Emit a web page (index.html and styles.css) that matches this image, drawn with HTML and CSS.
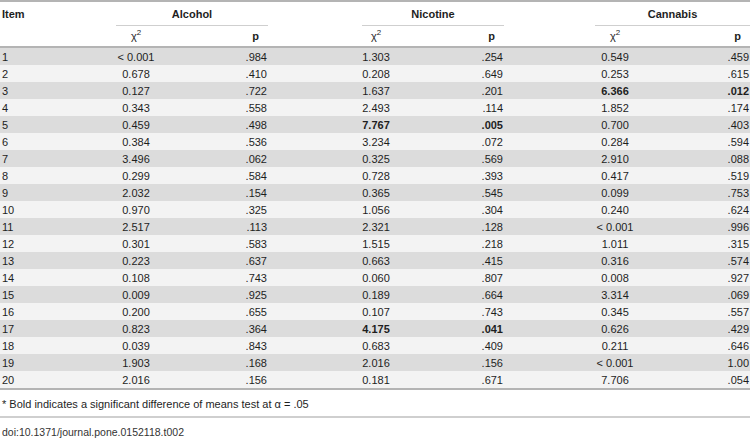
FILE: index.html
```html
<!DOCTYPE html>
<html>
<head>
    <meta charset="UTF-8">
    <title>Table 2</title>
    <link rel="stylesheet" href="styles.css">
</head>
<body>
    <table class="stats">
        <colgroup>
            <col class="c-item">
            <col class="c-chi"><col class="c-p1">
            <col class="c-gap1">
            <col class="c-chi2"><col class="c-p2">
            <col class="c-gap2">
            <col class="c-chi"><col class="c-p3">
        </colgroup>
        <thead>
            <tr class="group_row">
                <th class="item">Item</th>
                <th colspan="2" class="group">Alcohol</th>
                <th></th>
                <th colspan="2" class="group">Nicotine</th>
                <th></th>
                <th colspan="2" class="group">Cannabis</th>
            </tr>
            <tr class="sub_row">
                <th></th>
                <th class="chi">χ<sup>2</sup></th><th class="p">p</th>
                <th></th>
                <th class="chi">χ<sup>2</sup></th><th class="p">p</th>
                <th></th>
                <th class="chi">χ<sup>2</sup></th><th class="p">p</th>
            </tr>
        </thead>
        <tbody>
            <tr><td>1</td><td class="chi">&lt; 0.001</td><td class="p">.984</td><td></td><td class="chi">1.303</td><td class="p">.254</td><td></td><td class="chi">0.549</td><td class="p">.459</td></tr>
            <tr><td>2</td><td class="chi">0.678</td><td class="p">.410</td><td></td><td class="chi">0.208</td><td class="p">.649</td><td></td><td class="chi">0.253</td><td class="p">.615</td></tr>
            <tr><td>3</td><td class="chi">0.127</td><td class="p">.722</td><td></td><td class="chi">1.637</td><td class="p">.201</td><td></td><td class="chi sig">6.366</td><td class="p sig">.012</td></tr>
            <tr><td>4</td><td class="chi">0.343</td><td class="p">.558</td><td></td><td class="chi">2.493</td><td class="p">.114</td><td></td><td class="chi">1.852</td><td class="p">.174</td></tr>
            <tr><td>5</td><td class="chi">0.459</td><td class="p">.498</td><td></td><td class="chi sig">7.767</td><td class="p sig">.005</td><td></td><td class="chi">0.700</td><td class="p">.403</td></tr>
            <tr><td>6</td><td class="chi">0.384</td><td class="p">.536</td><td></td><td class="chi">3.234</td><td class="p">.072</td><td></td><td class="chi">0.284</td><td class="p">.594</td></tr>
            <tr><td>7</td><td class="chi">3.496</td><td class="p">.062</td><td></td><td class="chi">0.325</td><td class="p">.569</td><td></td><td class="chi">2.910</td><td class="p">.088</td></tr>
            <tr><td>8</td><td class="chi">0.299</td><td class="p">.584</td><td></td><td class="chi">0.728</td><td class="p">.393</td><td></td><td class="chi">0.417</td><td class="p">.519</td></tr>
            <tr><td>9</td><td class="chi">2.032</td><td class="p">.154</td><td></td><td class="chi">0.365</td><td class="p">.545</td><td></td><td class="chi">0.099</td><td class="p">.753</td></tr>
            <tr><td>10</td><td class="chi">0.970</td><td class="p">.325</td><td></td><td class="chi">1.056</td><td class="p">.304</td><td></td><td class="chi">0.240</td><td class="p">.624</td></tr>
            <tr><td>11</td><td class="chi">2.517</td><td class="p">.113</td><td></td><td class="chi">2.321</td><td class="p">.128</td><td></td><td class="chi">&lt; 0.001</td><td class="p">.996</td></tr>
            <tr><td>12</td><td class="chi">0.301</td><td class="p">.583</td><td></td><td class="chi">1.515</td><td class="p">.218</td><td></td><td class="chi">1.011</td><td class="p">.315</td></tr>
            <tr><td>13</td><td class="chi">0.223</td><td class="p">.637</td><td></td><td class="chi">0.663</td><td class="p">.415</td><td></td><td class="chi">0.316</td><td class="p">.574</td></tr>
            <tr><td>14</td><td class="chi">0.108</td><td class="p">.743</td><td></td><td class="chi">0.060</td><td class="p">.807</td><td></td><td class="chi">0.008</td><td class="p">.927</td></tr>
            <tr><td>15</td><td class="chi">0.009</td><td class="p">.925</td><td></td><td class="chi">0.189</td><td class="p">.664</td><td></td><td class="chi">3.314</td><td class="p">.069</td></tr>
            <tr><td>16</td><td class="chi">0.200</td><td class="p">.655</td><td></td><td class="chi">0.107</td><td class="p">.743</td><td></td><td class="chi">0.345</td><td class="p">.557</td></tr>
            <tr><td>17</td><td class="chi">0.823</td><td class="p">.364</td><td></td><td class="chi sig">4.175</td><td class="p sig">.041</td><td></td><td class="chi">0.626</td><td class="p">.429</td></tr>
            <tr><td>18</td><td class="chi">0.039</td><td class="p">.843</td><td></td><td class="chi">0.683</td><td class="p">.409</td><td></td><td class="chi">0.211</td><td class="p">.646</td></tr>
            <tr><td>19</td><td class="chi">1.903</td><td class="p">.168</td><td></td><td class="chi">2.016</td><td class="p">.156</td><td></td><td class="chi">&lt; 0.001</td><td class="p">1.00</td></tr>
            <tr><td>20</td><td class="chi">2.016</td><td class="p">.156</td><td></td><td class="chi">0.181</td><td class="p">.671</td><td></td><td class="chi">7.706</td><td class="p">.054</td></tr>
        </tbody>
    </table>
    <p class="footnote">* Bold indicates a significant difference of means test at α = .05</p>
    <p class="doi">doi:10.1371/journal.pone.0152118.t002</p>
</body>
</html>
```

FILE: styles.css
```css
body {
    margin: 0;
    font-family: 'Liberation Sans', Arial, sans-serif;
    font-size: 11px;
    color: #1e1e1e;
    background-color: white;
}

:root {
    --clr-line: #b4b4b4;
    --clr-row-dark: #dcdcdc;
    --clr-row-light: #f3f3f3;
}

.stats {
    width: 750px;
    table-layout: fixed;
    border-collapse: collapse;
    border-top: 2px solid var(--clr-line);
    border-bottom: 2px solid var(--clr-line);
}

.c-item { width: 116px; }
.c-chi { width: 40px; }
.c-chi2 { width: 28px; }
.c-p1 { width: 112px; }
.c-gap1 { width: 94px; }
.c-p2 { width: 114px; }
.c-gap2 { width: 91px; }
.c-p3 { width: 115px; }

.stats th,
.stats td {
    padding: 0 2px;
    white-space: nowrap;
}

.stats th {
    font-weight: 700;
}

.group_row th {
    height: 23px;
    text-align: left;
}

.group_row th.group {
    text-align: center;
    border-bottom: 1px solid #cfcfcf;
}

.sub_row th {
    height: 20px;
    border-bottom: 2px solid var(--clr-line);
}

.sub_row th.chi {
    font-weight: 400;
}

.sub_row th.p {
    padding-right: 9px;
}

.stats sup {
    font-size: 8px;
    line-height: 0;
    vertical-align: 5px;
}

.stats td {
    height: 17px;
    text-align: left;
}

.stats .chi {
    text-align: center;
    padding: 0;
    overflow: visible;
}

.stats .p {
    text-align: right;
    padding-right: 1px;
}

.stats tbody tr:nth-child(odd) {
    background-color: var(--clr-row-dark);
}

.stats tbody tr:nth-child(even) {
    background-color: var(--clr-row-light);
}

.stats .sig {
    font-weight: 700;
}

.footnote {
    margin: 0;
    padding: 8px 2px 5px;
    line-height: 13px;
    border-bottom: 2px solid #cfcfcf;
}

.doi {
    margin: 0;
    padding: 8px 2px 0;
    font-size: 10.5px;
    color: #333;
}
```
